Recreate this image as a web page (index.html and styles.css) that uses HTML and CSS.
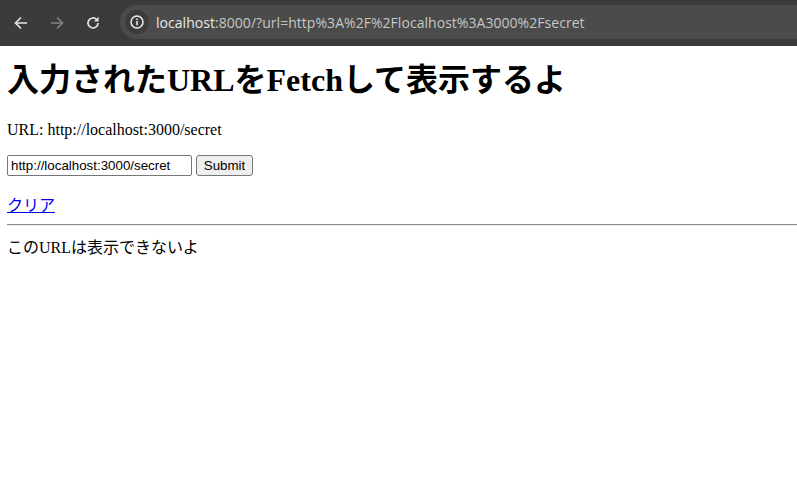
FILE: index.html
```html
<!DOCTYPE html>
<html lang="ja">
<head>
<meta charset="utf-8">
<title>Fetch</title>
<link rel="stylesheet" href="styles.css">
</head>
<body>
<div class="toolbar">
  <svg class="nav" width="16" height="16" viewBox="0 0 16 16"><path d="M14 8H3M8 2.5 2.5 8 8 13.5" fill="none" stroke="#e3e3e3" stroke-width="1.7"/></svg>
  <svg class="nav" width="16" height="16" viewBox="0 0 16 16"><path d="M2 8h11M8 2.5 13.5 8 8 13.5" fill="none" stroke="#808080" stroke-width="1.7"/></svg>
  <svg class="nav" width="16" height="16" viewBox="0 0 16 16"><path d="M13 8a5 5 0 1 1-1.5-3.6" fill="none" stroke="#e3e3e3" stroke-width="1.7"/><path d="M13.6 1.8v4.6H9z" fill="#e3e3e3"/></svg>
  <div class="omnibox">
    <span class="chip"><svg width="16" height="16" viewBox="0 0 16 16"><circle cx="8" cy="8" r="6" fill="none" stroke="#eee" stroke-width="1.5"/><path d="M8 7v4.3M8 4.6v1.4" stroke="#eee" stroke-width="1.5"/></svg></span>
    <span class="url"><span class="host">localhost</span>:8000/?url=http%3A%2F%2Flocalhost%3A3000%2Fsecret</span>
  </div>
</div>
<main class="page">
  <h1 class="title">入力されたURLをFetchして表示するよ</h1>
  <p class="para">URL: http://localhost:3000/secret</p>
  <form class="para form">
    <input class="field" type="text" value="http://localhost:3000/secret">
    <input class="btn" type="submit" value="Submit">
  </form>
  <div class="line"><a href="#">クリア</a></div>
  <hr class="rule">
  <div class="line">このURLは表示できないよ</div>
</main>
</body>
</html>
```
FILE: styles.css
```css
html, body { margin: 0; padding: 0; background: #fff; overflow: hidden; }
body { height: 481px; font-family: "Liberation Serif", "Noto Sans CJK JP", serif; font-size: 16px; color: #000; }
.toolbar { box-sizing: border-box; height: 46px; background: #3b3b3b; display: flex; align-items: center; padding: 0 0 0 13px; gap: 20px; }
.nav { flex: none; margin-top: -1px; }
.omnibox { flex: 1; height: 34px; margin: -2px 0 0 -1px; background: #4b4b4b; border-radius: 17px 0 0 17px; display: flex; align-items: center; padding-left: 5px; gap: 7px; }
.chip { width: 24px; height: 24px; border-radius: 50%; background: #3c3c3c; display: flex; align-items: center; justify-content: center; }
.url { font-family: "Open Sans", "Noto Sans", sans-serif; font-size: 14px; letter-spacing: 0.04px; color: #c4c7c5; white-space: nowrap; }
.host { color: #e8eaed; }
.page { padding: 0 0 0 7px; }
.title { font-size: 32px; line-height: 37px; margin: 16px 0 22px; font-weight: bold; }
.para { margin: 16px 0; line-height: 18px; }
.form { margin-bottom: 18px; }
.line { line-height: 24px; }
.field { box-sizing: border-box; width: 185px; height: 21px; margin: 0; padding: 1px 2px 1px 3px; font: 13.33px "Liberation Sans", sans-serif; border: 1px solid #767676; border-radius: 2px; }
.btn { box-sizing: border-box; height: 21px; width: 57px; margin: 0; padding: 1px 6px; font: 13.33px "Liberation Sans", sans-serif; border: 1px solid #767676; border-radius: 3px; background: #efefef; color: #000; }
.rule { margin: 6px 0 10px; border: 0; border-top: 1px solid #8c8c8c; border-bottom: 1px solid #eee; }
```
